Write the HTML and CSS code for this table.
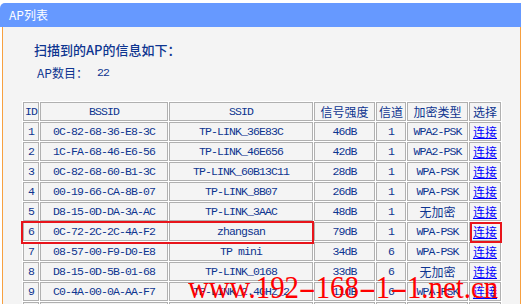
FILE: index.html
```html
<!DOCTYPE html>
<html>
<head>
<meta charset="utf-8">
<link rel="stylesheet" href="styles.css">
</head>
<body>
<div class="panel">
  <div class="panel-head">AP列表</div>
  <div class="panel-body">
    <div class="title">扫描到的AP的信息如下：</div>
    <div class="count"><span class="count-label">AP数目：</span><span class="count-num">22</span></div>
    <div class="table-wrap">
      <table class="ap-table">
        <colgroup>
          <col class="c-id"><col class="c-bssid"><col class="c-ssid"><col class="c-sig"><col class="c-ch"><col class="c-enc"><col class="c-sel">
        </colgroup>
        <tr>
          <th class="mono">ID</th><th class="mono">BSSID</th><th class="mono">SSID</th><th class="cjk">信号强度</th><th class="cjk">信道</th><th class="cjk">加密类型</th><th class="cjk">选择</th>
        </tr>
        <tr><td>1</td><td>0C-82-68-36-E8-3C</td><td>TP-LINK_36E83C</td><td>46dB</td><td>1</td><td>WPA2-PSK</td><td class="cjk"><a href="#">连接</a></td></tr>
        <tr><td>2</td><td>1C-FA-68-46-E6-56</td><td>TP-LINK_46E656</td><td>42dB</td><td>1</td><td>WPA2-PSK</td><td class="cjk"><a href="#">连接</a></td></tr>
        <tr><td>3</td><td>0C-82-68-60-B1-3C</td><td>TP-LINK_60B13C11</td><td>28dB</td><td>1</td><td>WPA-PSK</td><td class="cjk"><a href="#">连接</a></td></tr>
        <tr><td>4</td><td>00-19-66-CA-8B-07</td><td>TP-LINK_8B07</td><td>26dB</td><td>1</td><td>WPA-PSK</td><td class="cjk"><a href="#">连接</a></td></tr>
        <tr><td>5</td><td>D8-15-0D-DA-3A-AC</td><td>TP-LINK_3AAC</td><td>48dB</td><td>1</td><td class="cjk">无加密</td><td class="cjk"><a href="#">连接</a></td></tr>
        <tr><td>6</td><td>0C-72-2C-2C-4A-F2</td><td>zhangsan</td><td>79dB</td><td>1</td><td>WPA-PSK</td><td class="cjk"><a href="#">连接</a></td></tr>
        <tr><td>7</td><td>08-57-00-F9-D0-E8</td><td>TP mini</td><td>34dB</td><td>6</td><td>WPA-PSK</td><td class="cjk"><a href="#">连接</a></td></tr>
        <tr><td>8</td><td>D8-15-0D-5B-01-68</td><td>TP-LINK_0168</td><td>33dB</td><td>6</td><td class="cjk">无加密</td><td class="cjk"><a href="#">连接</a></td></tr>
        <tr><td>9</td><td>C0-4A-00-0A-AA-F7</td><td>TP-LINK_2.4GHz_2</td><td>11dB</td><td>6</td><td>WPA-PSK</td><td class="cjk"><a href="#">连接</a></td></tr>
        <tr><td></td><td></td><td></td><td></td><td></td><td></td><td></td></tr>
      </table>
      <div class="mark mark-row"></div>
      <div class="mark mark-link"></div>
    </div>
    <div class="watermark">www.192<span class="dash">-</span>168<span class="dash">-</span>1<span class="dash">-</span>1.net.cn</div>
  </div>
</div>
</body>
</html>
```
FILE: styles.css
```css
html, body {
  margin: 0;
  padding: 0;
  background: #ffffff;
  overflow: hidden;
}
body {
  width: 524px;
  height: 304px;
  font-family: "Noto Sans CJK SC", sans-serif;
}
.panel {
  margin-top: 3px;
  width: 521px;
}
.panel-head {
  height: 24px;
  line-height: 24px;
  background: #6699ff;
  border-top-left-radius: 5px;
  color: #ffffff;
  font-size: 12px;
  padding-left: 9px;
}
.panel-body {
  position: relative;
  margin-left: 2px;
  width: 517px;
  height: 277px;
  border-left: 1px solid #f7a040;
  border-right: 1px solid #f7a040;
  background: #f4f4f4;
  color: #0e3590;
  overflow: hidden;
}
.title {
  margin: 15px 0 0 31px;
  line-height: 16px;
  font-size: 13px;
  font-weight: 500;
}
.count {
  margin: 7px 0 0 34px;
  line-height: 16px;
  font-size: 12px;
  display: flex;
}
.count-label {
  width: 60px;
}
.count-num {
  font-family: "Liberation Mono", monospace;
  font-size: 11.5px;
  letter-spacing: -0.9px;
}
.table-wrap {
  position: relative;
  margin: 20px 0 0 19px;
  width: 480px;
}
.ap-table {
  border-collapse: separate;
  border-spacing: 1px;
  table-layout: fixed;
  width: 480px;
  background: #ffffff;
}
.c-id { width: 16px; }
.c-bssid { width: 128px; }
.c-ssid { width: 144px; }
.c-sig { width: 61px; }
.c-ch { width: 30px; }
.c-enc { width: 61px; }
.c-sel { width: 32px; }
.ap-table th,
.ap-table td {
  box-sizing: border-box;
  height: 19px;
  padding: 0;
  border: 1px solid #b0b0b0;
  background: #f4f4f4;
  text-align: center;
  vertical-align: middle;
  line-height: 17px;
  font-weight: normal;
  font-family: "Liberation Mono", monospace;
  font-size: 11.5px;
  letter-spacing: -0.9px;
  white-space: nowrap;
  overflow: hidden;
  color: #0e3590;
}
.ap-table .cjk {
  font-family: "Noto Sans CJK SC", sans-serif;
  font-size: 12px;
  letter-spacing: 0;
}
.ap-table a {
  color: #0000ff;
  text-decoration: underline;
}
.mark {
  position: absolute;
  box-sizing: border-box;
  border: 2px solid #e8141b;
}
.mark-row {
  left: -1px;
  top: 120px;
  width: 293px;
  height: 23px;
}
.mark-link {
  left: 448px;
  top: 121px;
  width: 32px;
  height: 21px;
}
.watermark {
  position: absolute;
  left: 185px;
  top: 244px;
  font-family: "Liberation Serif", serif;
  font-size: 32px;
  line-height: 32px;
  color: #ff0000;
  white-space: nowrap;
  transform-origin: left top;
  transform: scaleX(0.9);
  pointer-events: none;
}
.dash {
  display: inline-block;
  transform: scaleX(1.8);
  margin: 0 4px;
}
```
